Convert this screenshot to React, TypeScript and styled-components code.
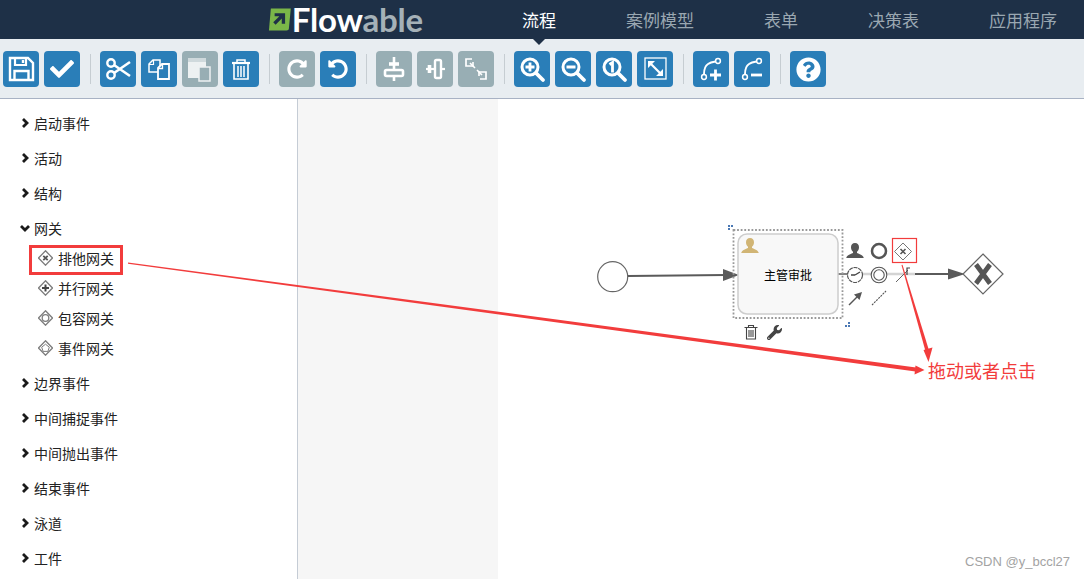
import React from "react";
import styled, { createGlobalStyle } from "styled-components";
import { FaCheck, FaQuestionCircle, FaRedoAlt, FaUndoAlt, FaWrench } from "react-icons/fa";

const Global = createGlobalStyle`
  html, body { margin: 0; padding: 0; background: #fff; }
  body { font-family: "Noto Sans CJK SC", "Liberation Sans", sans-serif; }
`;

const Page = styled.div`
  position: relative;
  width: 1084px;
  height: 579px;
  overflow: hidden;
  display: flex;
  flex-direction: column;
`;

const Header = styled.header`
  height: 39px;
  flex: none;
  background: #1e3047;
  display: flex;
  align-items: center;
  padding-left: 268px;
`;

const Logo = styled.div`
  width: 155px;
  display: flex;
  align-items: center;
  margin-right: 64px;
`;

const LogoText = styled.span`
  font-family: "Lato", "Liberation Sans", sans-serif;
  font-size: 33px;
  line-height: 39px;
  font-weight: 700;
  letter-spacing: -0.2px;
  color: #fff;
  white-space: nowrap;
`;

const LogoTail = styled.span`
  color: #a5b1b8;
`;

const Nav = styled.nav`
  display: flex;
`;

const NavItem = styled.div<{ $active?: boolean }>`
  position: relative;
  padding: 0 35px;
  font-size: 17px;
  line-height: 39px;
  color: ${(p) => (p.$active ? "#ffffff" : "#9aa7b1")};
  white-space: nowrap;
  ${(p) =>
    p.$active &&
    `&::after {
      content: "";
      position: absolute;
      left: 50%;
      top: 39px;
      margin-left: -6px;
      border-left: 6px solid transparent;
      border-right: 6px solid transparent;
      border-top: 6px solid #1e3047;
      z-index: 2;
    }`}
`;

const Toolbar = styled.div`
  height: 60px;
  flex: none;
  box-sizing: border-box;
  background: #e8edf1;
  border-bottom: 1px solid #a8b2c4;
  padding: 12px 0 0 3px;
  display: flex;
  align-items: flex-start;
`;

const ToolGroup = styled.div`
  display: flex;
  gap: 5px;
`;

const Sep = styled.div`
  width: 1px;
  height: 30px;
  margin: 3px 9px 0 10px;
  background: #c6cdd2;
`;

const ToolButton = styled.div<{ $off?: boolean }>`
  width: 36px;
  height: 36px;
  border-radius: 4px;
  background: ${(p) => (p.$off ? "#98aeb4" : "#2a7eb8")};
  color: #fff;
  display: flex;
  align-items: center;
  justify-content: center;
`;

const Main = styled.div`
  flex: 1;
  display: flex;
  min-height: 0;
`;

const Sidebar = styled.aside`
  width: 298px;
  flex: none;
  box-sizing: border-box;
  border-right: 1px solid #c5ccd5;
  padding-top: 6px;
`;

const GroupRow = styled.div`
  height: 35px;
  display: flex;
  align-items: center;
  padding-left: 20px;
  gap: 4px;
  font-size: 14px;
  color: #222;
`;

const Chevron = styled.svg`
  width: 10px;
  height: 10px;
  flex: none;
`;

const Children = styled.div`
  margin: -2px 0 2px;
`;

const ChildRow = styled.div`
  height: 30px;
  display: flex;
  align-items: center;
  padding-left: 38px;
  gap: 5px;
  font-size: 14px;
  color: #222;
`;

const Canvas = styled.div`
  position: relative;
  flex: 1;
  display: flex;
`;

const GreyStrip = styled.div`
  width: 200px;
  background: #f6f6f6;
`;

const DiagramSvg = styled.svg`
  position: absolute;
  left: 0;
  top: 0;
`;

const Overlay = styled.svg`
  position: absolute;
  left: 0;
  top: 0;
  pointer-events: none;
`;

const Note = styled.div`
  position: absolute;
  left: 928px;
  top: 357px;
  font-size: 18px;
  line-height: 26px;
  color: #f23c3c;
  white-space: nowrap;
`;

const Watermark = styled.div`
  position: absolute;
  right: 14px;
  top: 554px;
  font-family: "Liberation Sans", sans-serif;
  font-size: 13px;
  line-height: 16px;
  color: #a3a3a3;
`;

const Ico: React.FC<{ children: React.ReactNode }> = ({ children }) => (
  <svg width="36" height="36" viewBox="0 0 36 36" fill="none" stroke="currentColor" strokeWidth="2">
    {children}
  </svg>
);

const SaveIcon = () => (
  <Ico>
    <path d="M7 7h18l5 5v17H7z" strokeWidth="2.400" />
    <path d="M12 7v7h11V7" strokeWidth="2.200" />
    <path d="M20 9v3" strokeWidth="2.400" />
    <path d="M11.500 29v-9h14v9" strokeWidth="2.400" />
  </Ico>
);
const CutIcon = () => (
  <Ico>
    <circle cx="11" cy="12" r="3.700" strokeWidth="2.400" />
    <circle cx="11" cy="24" r="3.700" strokeWidth="2.400" />
    <path d="M14 14l16 11M14 22L30 11" strokeWidth="2.600" />
  </Ico>
);
const CopyIcon = () => (
  <Ico>
    <path d="M8 13l4-4h7v12H8z" strokeWidth="1.500" />
    <path d="M8 13.500h4.500V9" strokeWidth="1.200" />
    <path d="M17 17l4-4h7v15H17z" strokeWidth="1.800" fill="#2a7eb8" />
    <path d="M17 17.500h4.500V13" strokeWidth="1.300" />
  </Ico>
);
const PasteIcon = () => (
  <Ico>
    <rect x="6" y="7" width="18" height="20" fill="#edf1f2" stroke="none" />
    <rect x="6" y="7" width="18" height="4" fill="#cfd9dc" stroke="none" />
    <path d="M17 16h11v14H17z" fill="#98aeb4" stroke="#edf1f2" strokeWidth="1.500" />
  </Ico>
);
const TrashIcon = () => (
  <Ico>
    <path d="M9 12h18" strokeWidth="2.200" />
    <path d="M14 11V9h8v2" strokeWidth="1.500" />
    <path d="M11 13v15h14V13" strokeWidth="1.600" />
    <path d="M15 15v11M18 15v11M21 15v11" strokeWidth="1.500" />
  </Ico>
);
const AlignHIcon = () => (
  <Ico>
    <path d="M18 6v24" strokeWidth="2.600" />
    <path d="M13 13h10" strokeWidth="3.600" />
    <rect x="9" y="19" width="18" height="6" rx="1.500" fill="#98aeb4" strokeWidth="2.600" />
  </Ico>
);
const AlignVIcon = () => (
  <Ico>
    <path d="M9 18h19" strokeWidth="2.200" />
    <path d="M12.500 14v8" strokeWidth="3.600" />
    <rect x="18" y="9" width="6" height="18" rx="1.500" fill="#98aeb4" strokeWidth="2.400" />
  </Ico>
);
const SameSizeIcon = () => (
  <Ico>
    <path d="M14 8H8v7h3M22 28h6v-7h-3" strokeWidth="1.700" />
    <path d="M12 12l5 5M19 19l5 5" strokeWidth="1.600" />
    <path d="M15 11v4h-4M21 25v-4h4" strokeWidth="1.600" />
  </Ico>
);
const Lens: React.FC<{ children: React.ReactNode }> = ({ children }) => (
  <Ico>
    <circle cx="16" cy="16" r="8" strokeWidth="3" />
    <path d="M22 22l7 7" strokeWidth="3.800" strokeLinecap="round" />
    {children}
  </Ico>
);
const ZoomInIcon = () => (
  <Lens>
    <path d="M11.500 16h9M16 11.500v9" strokeWidth="2.800" />
  </Lens>
);
const ZoomOutIcon = () => (
  <Lens>
    <path d="M11.500 16h9" strokeWidth="3" />
  </Lens>
);
const ZoomOneIcon = () => (
  <Lens>
    <path d="M13.500 13.500l3-2v10" strokeWidth="2.800" />
  </Lens>
);
const FitIcon = () => (
  <Ico>
    <rect x="8" y="7" width="21" height="21" strokeWidth="1.300" />
    <path d="M13 12l11 11" strokeWidth="2.200" />
    <path d="M11 10h7l-7 7zM26 25h-7l7-7z" fill="currentColor" stroke="none" />
  </Ico>
);
const Bend: React.FC<{ children: React.ReactNode }> = ({ children }) => (
  <Ico>
    <circle cx="11" cy="26" r="2.400" strokeWidth="1.500" />
    <circle cx="25" cy="10" r="2.400" strokeWidth="1.500" />
    <path d="M11 23c0-5 1-8 4-10 2-1.500 4-2 7.500-2.500" strokeWidth="1.900" />
    {children}
  </Ico>
);
const AddBendIcon = () => (
  <Bend>
    <path d="M17 24h11M22.500 18.500v11" strokeWidth="2.800" />
  </Bend>
);
const RemoveBendIcon = () => (
  <Bend>
    <path d="M17 24h11" strokeWidth="2.800" />
  </Bend>
);

const groups: { off?: boolean; icon: React.ReactNode }[][] = [
  [{ icon: <SaveIcon /> }, { icon: <FaCheck size={24} /> }],
  [{ icon: <CutIcon /> }, { icon: <CopyIcon /> }, { off: true, icon: <PasteIcon /> }, { icon: <TrashIcon /> }],
  [
    { off: true, icon: <FaRedoAlt size={20} /> },
    { icon: <FaUndoAlt size={20} /> },
  ],
  [
    { off: true, icon: <AlignHIcon /> },
    { off: true, icon: <AlignVIcon /> },
    { off: true, icon: <SameSizeIcon /> },
  ],
  [{ icon: <ZoomInIcon /> }, { icon: <ZoomOutIcon /> }, { icon: <ZoomOneIcon /> }, { icon: <FitIcon /> }],
  [{ icon: <AddBendIcon /> }, { icon: <RemoveBendIcon /> }],
  [{ icon: <FaQuestionCircle size={25} /> }],
];

const GatewayIcon: React.FC<{ kind: "x" | "plus" | "o" | "e" }> = ({ kind }) => (
  <svg width="15" height="16" viewBox="0 0 15 16" fill="none" stroke="#7d7d7d">
    <path d="M7.500 .8L14.500 8l-7 7.200L.5 8z" strokeWidth="1.300" />
    {kind === "x" && <path d="M5.300 5.800l4.400 4.400M9.700 5.800l-4.400 4.400" stroke="#555" strokeWidth="1.800" />}
    {kind === "plus" && <path d="M7.500 4.500v7M4 8h7" stroke="#444" strokeWidth="2" />}
    {kind === "o" && <circle cx="7.500" cy="8" r="3.300" strokeWidth="1.300" />}
    {kind === "e" && <path d="M7.500 4.200l3.800 3-1.400 4.200H5.100L3.700 7.200z" strokeWidth="1" />}
  </svg>
);

const topGroups = ["启动事件", "活动", "结构"];
const gateways: { label: string; kind: "x" | "plus" | "o" | "e" }[] = [
  { label: "排他网关", kind: "x" },
  { label: "并行网关", kind: "plus" },
  { label: "包容网关", kind: "o" },
  { label: "事件网关", kind: "e" },
];
const bottomGroups = ["边界事件", "中间捕捉事件", "中间抛出事件", "结束事件", "泳道", "工件"];

const Closed: React.FC<{ label: string }> = ({ label }) => (
  <GroupRow>
    <Chevron viewBox="0 0 10 10">
      <path d="M3 1l4 4-4 4" fill="none" stroke="#1a1a1a" strokeWidth="2.800" />
    </Chevron>
    {label}
  </GroupRow>
);

const userPath =
  "M0 -8c2.600 0 4 2 4 4.200 0 2-.9 3.600-2 4.500v1.300c2 .9 6 1.800 6.800 5H-8.800c.8-3.200 4.800-4.100 6.800-5V.7c-1.100-.9-2-2.500-2-4.500C-4-6-2.600-8 0-8z";

const Diagram = () => (
  <DiagramSvg width="786" height="480" viewBox="298 99 786 480">
    <circle cx="612.700" cy="276.700" r="15" fill="#fff" stroke="#666" strokeWidth="1.200" />
    <path d="M628 276l98-1" stroke="#5a5a5a" strokeWidth="2" />
    <path d="M723 269l16 6-16 6z" fill="#5a5a5a" />
    <path d="M838 274h20" stroke="#5a5a5a" strokeWidth="1.500" />
    <path d="M858 274h57" stroke="#d4d4d4" strokeWidth="2.500" />
    <path d="M915 274h36" stroke="#5a5a5a" strokeWidth="2" />
    <path d="M948 268.500l17 5.500-17 5.500z" fill="#5a5a5a" />
    <path d="M983 254l20 20-20 20-20-20z" fill="#fff" stroke="#666" strokeWidth="1.200" />
    <path d="M976 264.500l14 19M990 264.500l-14 19" stroke="#555" strokeWidth="4.800" />

    <rect x="733.500" y="230" width="109" height="88" fill="none" stroke="#999" strokeWidth="1.800" strokeDasharray="1.800 1.800" />
    <rect x="738" y="234" width="100" height="80" rx="9" fill="#f8f8f8" stroke="#cdcdcd" strokeWidth="1.500" />
    <g fill="#4a78b4">
      <rect x="728" y="225" width="2" height="2" />
      <rect x="731" y="225" width="2" height="2" />
      <rect x="728" y="228" width="2" height="2" />
      <rect x="845" y="325" width="2" height="2" />
      <rect x="848" y="325" width="2" height="2" />
      <rect x="848" y="322" width="2" height="2" />
    </g>
    <path d={userPath} transform="translate(750 246)" fill="#d1b575" />
    <text x="788" y="279.500" textAnchor="middle" fontSize="12" fill="#000" fontFamily="Noto Sans CJK SC, sans-serif">
      主管审批
    </text>

    <path d={userPath} transform="translate(855 251)" fill="#555" />
    <circle cx="879" cy="251" r="7" fill="#fff" stroke="#555" strokeWidth="2.500" />
    <path d="M903 243l8.500 8.500-8.500 8.500-8.500-8.500z" fill="#fff" stroke="#777" strokeWidth="1" />
    <path d="M900.500 249l5 5M905.500 249l-5 5" stroke="#555" strokeWidth="1.600" />

    <circle cx="855" cy="275" r="7.500" fill="#fff" stroke="#555" strokeWidth="1.200" strokeDasharray="4 .8" />
    <path d="M855 275l5-3M855 275h-4" stroke="#444" strokeWidth="1.400" />
    <circle cx="879" cy="275" r="7.800" fill="#fff" stroke="#555" strokeWidth="1.100" />
    <circle cx="879" cy="275" r="5.200" fill="#fff" stroke="#555" strokeWidth="1.100" />
    <path d="M896 282l12-12" stroke="#666" strokeWidth="1" />
    <path d="M910 268h-3v7" stroke="#444" strokeWidth="1.200" fill="none" />

    <path d="M849 305l10-10" stroke="#555" strokeWidth="1.500" />
    <path d="M862 292l-8 2.500 5.500 5.500z" fill="#555" />
    <path d="M872 305l14-14" stroke="#555" strokeWidth="1.100" strokeDasharray="2 1" />

    <g fill="none" stroke="#444" strokeWidth="1.100">
      <path d="M744.500 327.500h13M748.500 327v-1.500h5v1.500M746.500 328v11h9v-11M749 330v7M751 330v7M753 330v7" />
    </g>
    <g transform="translate(767 325)" color="#444">
      <FaWrench size={15} />
    </g>
  </DiagramSvg>
);

export default function App() {
  return (
    <Page>
      <Global />
      <Header>
        <Logo>
          <svg width="25" height="25" viewBox="0 0 25 25">
            <path d="M3 1h21l-2 21c-.2 1.500-1 2-2.500 2H1z" fill="#7ab648" />
            <path d="M7 6h11v11h-3.500v-5.500L8 18l-2.500-2.500L12 9H7z" fill="#1e3047" />
          </svg>
          <LogoText>
            Flow<LogoTail>able</LogoTail>
          </LogoText>
        </Logo>
        <Nav>
          <NavItem $active>流程</NavItem>
          <NavItem>案例模型</NavItem>
          <NavItem>表单</NavItem>
          <NavItem>决策表</NavItem>
          <NavItem>应用程序</NavItem>
        </Nav>
      </Header>
      <Toolbar>
        {groups.map((g, i) => (
          <React.Fragment key={i}>
            {i > 0 && <Sep />}
            <ToolGroup>
              {g.map((b, j) => (
                <ToolButton key={j} $off={b.off}>
                  {b.icon}
                </ToolButton>
              ))}
            </ToolGroup>
          </React.Fragment>
        ))}
      </Toolbar>
      <Main>
        <Sidebar>
          {topGroups.map((l) => (
            <Closed key={l} label={l} />
          ))}
          <GroupRow>
            <Chevron viewBox="0 0 10 10">
              <path d="M1 3l4 4 4-4" fill="none" stroke="#1a1a1a" strokeWidth="2.800" />
            </Chevron>
            网关
          </GroupRow>
          <Children>
            {gateways.map((g) => (
              <ChildRow key={g.label}>
                <GatewayIcon kind={g.kind} />
                {g.label}
              </ChildRow>
            ))}
          </Children>
          {bottomGroups.map((l) => (
            <Closed key={l} label={l} />
          ))}
        </Sidebar>
        <Canvas>
          <GreyStrip />
          <Diagram />
        </Canvas>
      </Main>
      <Overlay width="1084" height="579" viewBox="0 0 1084 579">
        <rect x="30.500" y="246.500" width="91" height="27" fill="none" stroke="#f23c3c" strokeWidth="3" />
        <rect x="892.500" y="238.500" width="24" height="24" fill="none" stroke="#f23c3c" strokeWidth="1.200" />
        <path d="M128 262.400L916 367.400l-.5 4.200L128 263.800z" fill="#f23c3c" />
        <path d="M924.500 370l-10 4.500 1-9z" fill="#f23c3c" />
        <path d="M901.500 265l1-.3L929.500 352l-3.500 1z" fill="#f23c3c" />
        <path d="M928.500 362l-5-12 9-2.500z" fill="#f23c3c" />
      </Overlay>
      <Note>拖动或者点击</Note>
      <Watermark>CSDN @y_bccl27</Watermark>
    </Page>
  );
}
